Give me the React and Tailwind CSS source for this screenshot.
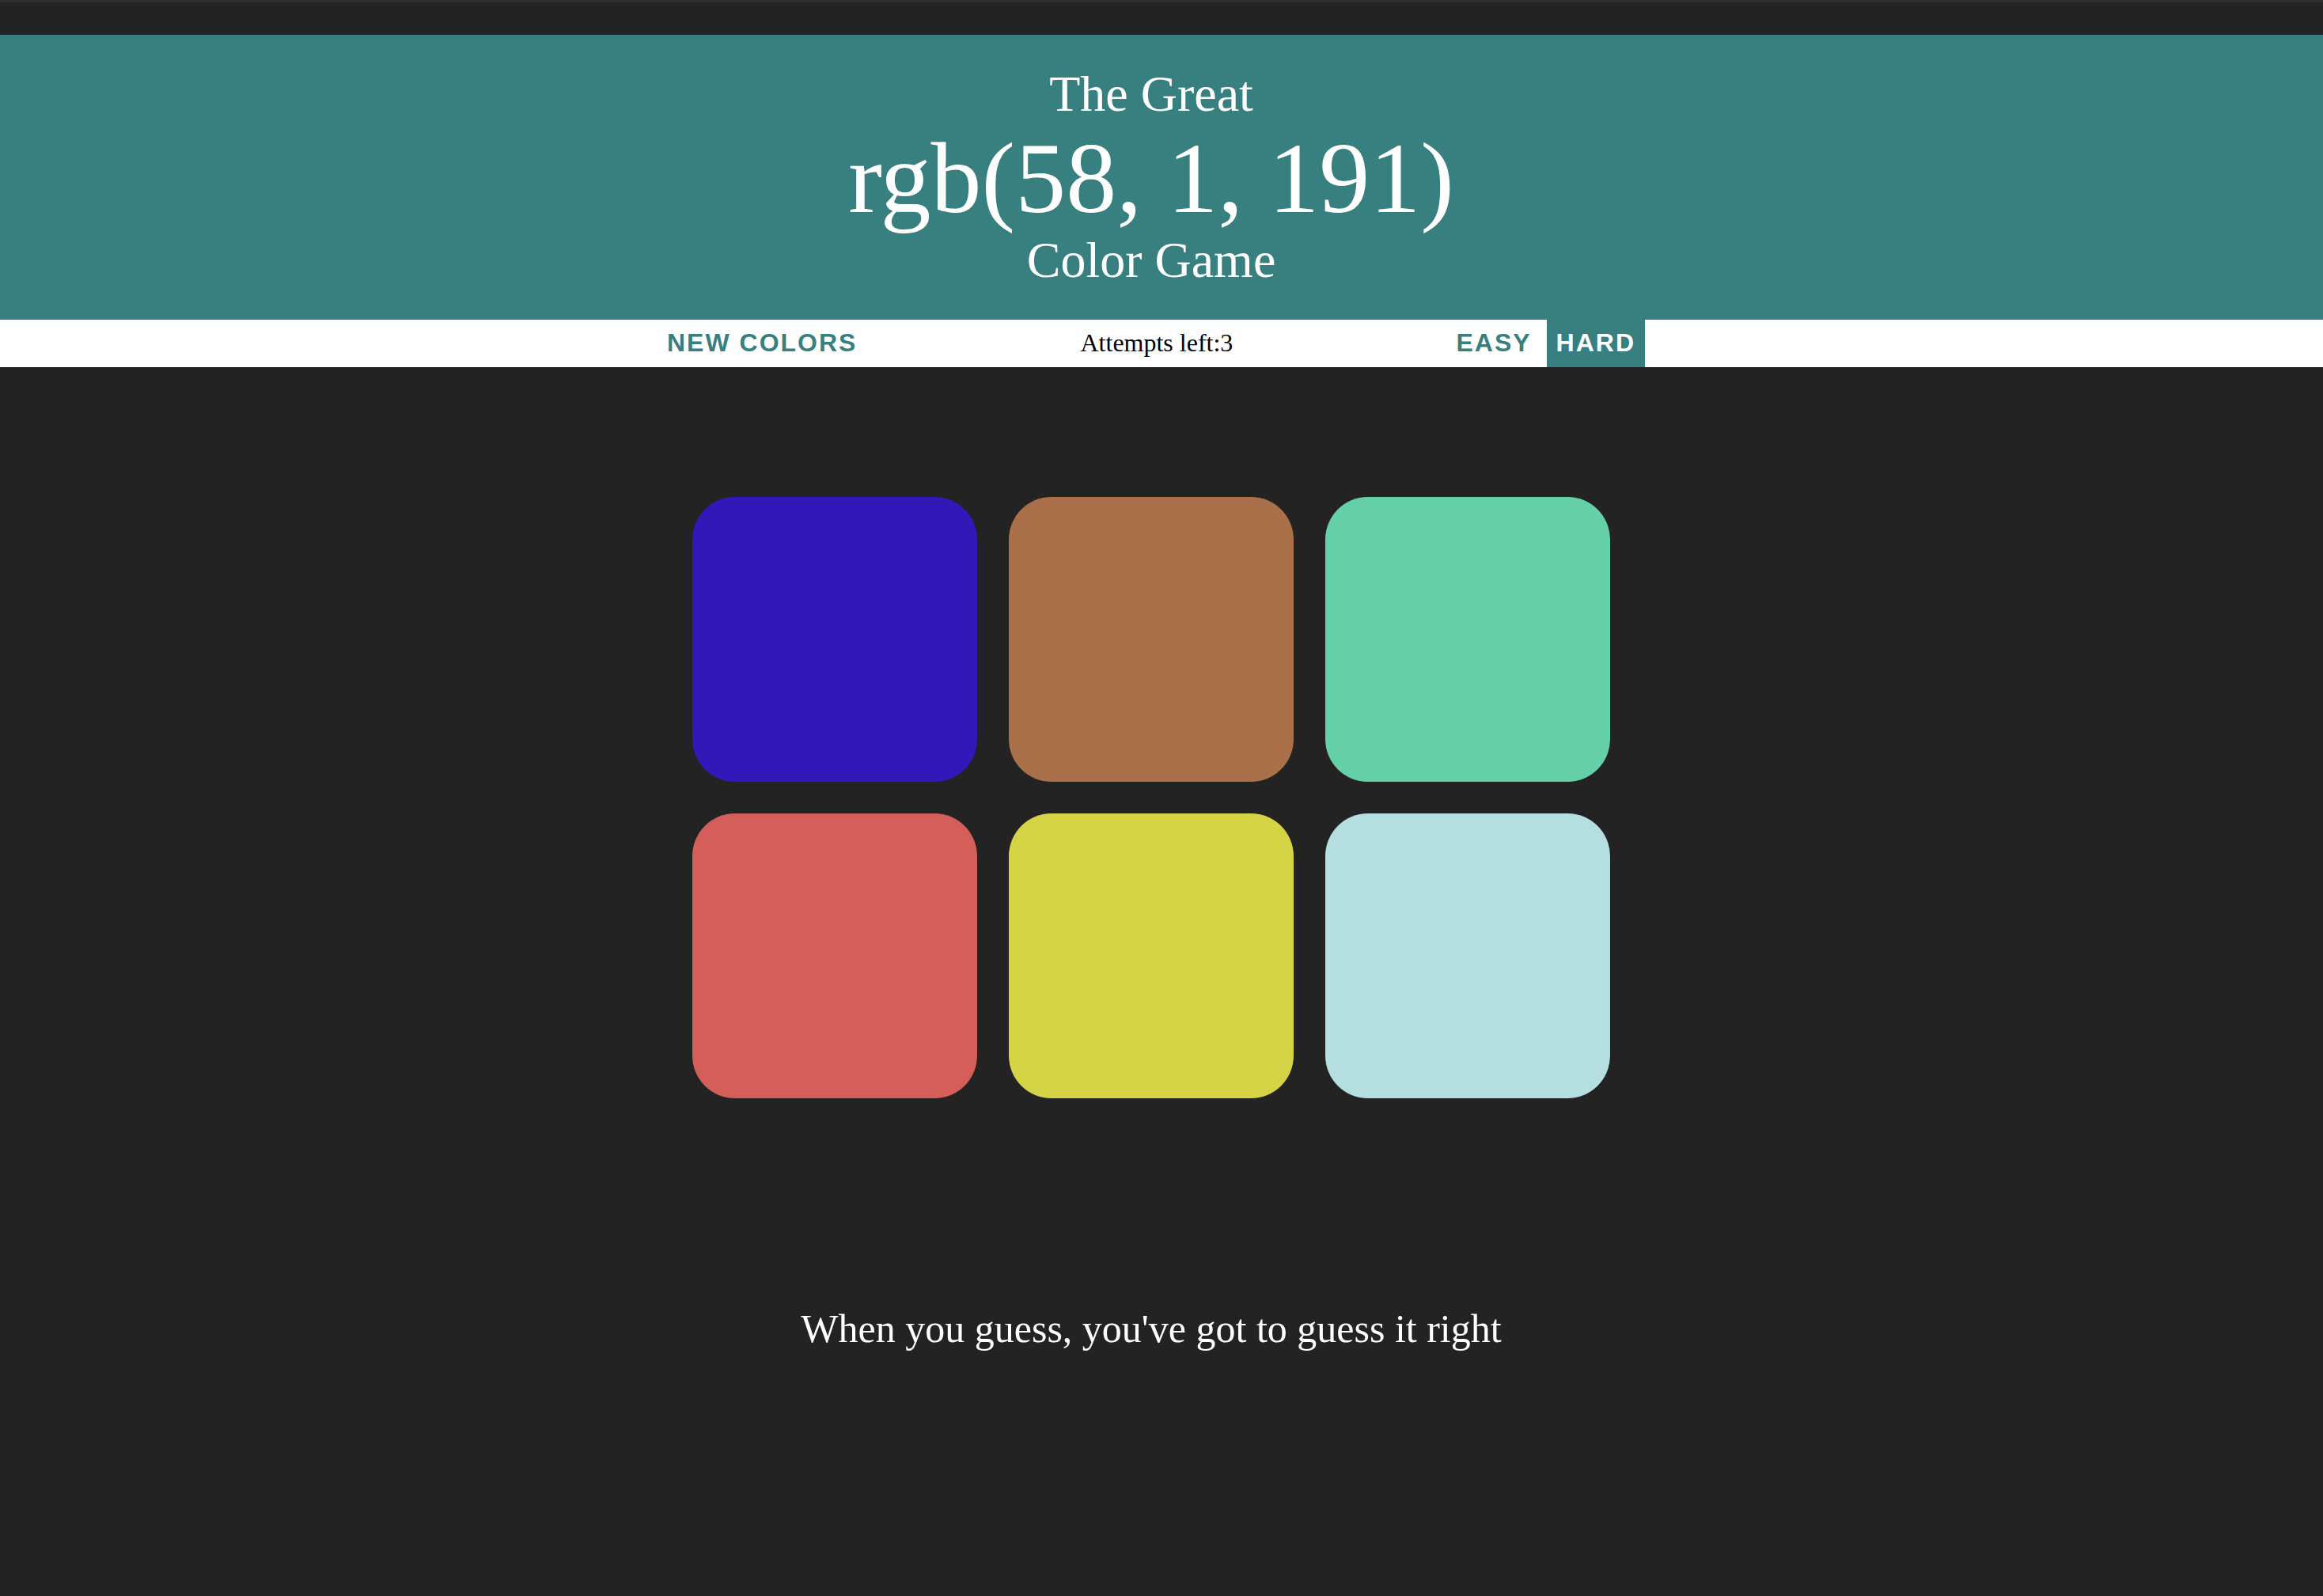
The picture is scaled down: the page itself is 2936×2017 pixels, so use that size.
export default function App() {
  const colors = ["#3218b8", "#a97049", "#66d1a8", "#d45f5a", "#d5d447", "#b5dee0"];
  const serif = { fontFamily: '"Liberation Serif", "Times New Roman", serif' };
  const sans = { fontFamily: '"Liberation Sans", Arial, sans-serif' };
  return (
    <div className="min-h-[2017px] bg-[#232323] flex flex-col" style={serif}>
      <div className="h-[3px] bg-[#2e2e31]" />
      <div className="h-[41px]" />
      <header className="bg-[#387f80] text-white pt-[40px] pb-[39px] pr-[26px] flex flex-col items-center font-normal">
        <div className="text-[64px] leading-[70.4px]">The Great</div>
        <div className="text-[128px] leading-[137px] pt-[3px]">rgb(58, 1, 191)</div>
        <div className="text-[64px] leading-[70.4px]">Color Game</div>
      </header>
      <nav className="bg-white h-[60px] pr-[26px] flex justify-center items-stretch">
        <div className="flex items-stretch">
          <button
            className="h-full px-[12px] pb-[2px] text-[32px] font-bold uppercase tracking-[2px] text-[#387f80] bg-white"
            style={sans}
          >
            New Colors
          </button>
          <div className="w-[587px] ml-[73px] pb-[2px] flex items-center justify-center text-[32px] text-black">
            Attempts left:3
          </div>
          <div className="ml-[73px] flex items-stretch gap-[7px]">
            <button
              className="h-full px-[12px] pb-[2px] text-[32px] font-bold uppercase tracking-[2px] text-[#387f80] bg-white"
              style={sans}
            >
              Easy
            </button>
            <button
              className="h-full px-[12px] pb-[2px] text-[32px] font-bold uppercase tracking-[2px] text-white bg-[#387f80]"
              style={sans}
            >
              Hard
            </button>
          </div>
        </div>
      </nav>
      <main className="pr-[26px] flex flex-col items-center">
        <div className="mt-[164px] grid grid-cols-3 gap-[40px]">
          {colors.map((c, i) => (
            <div
              key={i}
              className="w-[360px] h-[360px] rounded-[54px]"
              style={{ backgroundColor: c }}
            />
          ))}
        </div>
        <p className="mt-[261px] text-[50px] leading-[60px] text-white">
          When you guess, you've got to guess it right
        </p>
      </main>
    </div>
  );
}
